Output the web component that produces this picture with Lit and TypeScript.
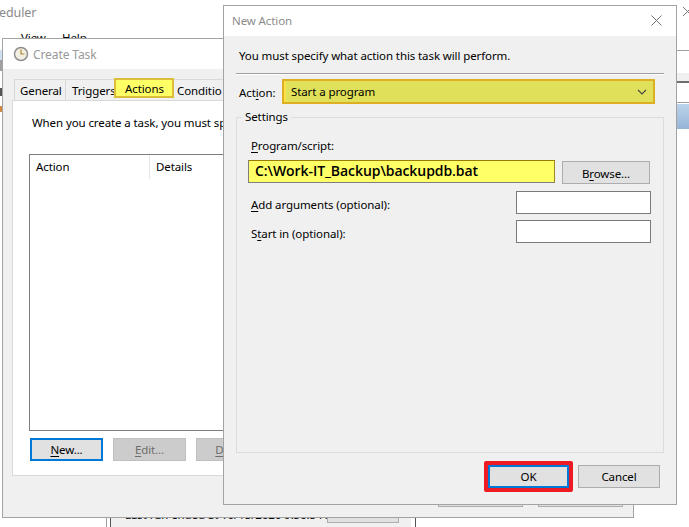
import { LitElement, html, css } from "lit";
import { customElement } from "lit/decorators.js";

@customElement("app-root")
export class AppRoot extends LitElement {
  static styles = css`
    :host { display: block; position: relative; width: 689px; height: 527px; overflow: hidden; background: #fff;
      font-family: "Noto Sans", "Open Sans", sans-serif; font-size: 11.5px; letter-spacing: -.1px; color: #000; }
    * { box-sizing: border-box; }
    u { text-decoration: underline; text-underline-offset: 2px; text-decoration-thickness: 1px; }

    /* background scheduler window */
    .back { position: absolute; left: 0; top: 0; width: 689px; height: 527px; }
    .bt { position: absolute; white-space: nowrap; line-height: 16px; }
    .sched-title { left: -1px; top: 5px; color: #8a8a8a; font-size: 12.5px; }
    .m-view { left: 21px; top: 30px; }
    .m-help { left: 62px; top: 30px; }
    .strip { position: absolute; left: 0; width: 2px; }
    .s1 { top: 50px; height: 10px; background: #cfe0f0; }
    .s2 { top: 60px; height: 11px; background: #a0a0a0; }
    .s3 { top: 88px; height: 8px; background: #555; }
    .s4 { top: 106px; height: 6px; background: #d08a40; }
    .right-x { position: absolute; left: 682px; top: 6px; }
    .r-line { position: absolute; left: 676px; width: 13px; }
    .r1 { top: 50px; height: 1px; background: #a0a0a0; }
    .r2 { top: 73px; height: 8px; background: #f0f0f0; }
    .r3 { top: 81px; height: 2px; background: #6e6e6e; }
    .r4 { top: 102px; height: 1px; background: #a0a0a0; }
    .r5 { top: 104px; height: 25px; background: linear-gradient(#bcd4ec, #96b4d6); }
    .pane { position: absolute; left: 106px; top: 500px; width: 310px; height: 27px; background: #f0f0f0;
      border-left: 1px solid #a0a0a0; border-right: 1px solid #555; box-shadow: inset 3px 0 0 #fff, inset 4px 0 0 #555, inset -4px 0 0 #fff; }
    .last-run { left: 18px; top: 7px; }
    .pane-btn { position: absolute; left: 220px; top: 0; width: 72px; height: 23px; background: #e1e1e1; border: 1px solid #adadad; }

    /* windows */
    .win { position: absolute; display: flex; flex-direction: column; background: #f0f0f0; border: 1px solid #a3a3a3; }
    .titlebar { display: flex; align-items: center; background: #fff; height: 30px; flex: none; color: #8c8c8c; }
    .create { left: 2px; top: 38px; width: 632px; height: 480px; }
    .create .titlebar { padding-left: 10px; gap: 4px; font-size: 12px; color: #999; }
    .create-body { flex: 1; padding: 10px 10px 0 9px; display: flex; flex-direction: column; }
    .tabs { display: flex; height: 21px; padding-left: 2px; flex: none; align-items: flex-start; }
    .tab { width: 51px; height: 21px; padding: 1px 0 0 6px; line-height: 20px; background: #f0f0f0; border: 1px solid #d9d9d9; border-bottom: none; border-right: none; white-space: nowrap; }
    .tab.first { padding-left: 5px; }
    .tab.hl { position: relative; z-index: 1; width: 60px; height: 20px; margin: -1px 0 0 -2px; padding: 0 0 0 9px; line-height: 17px; background: #ffff66; border: 2px solid #dcbd3a; }
    .tab.last { width: 50px; padding-left: 3px; border-left: none; }
    .panel { width: 611px; height: 376px; flex: none; background: #fff; border: 1px solid #d9d9d9; padding: 14px 16px 0; }
    .panel p { margin: 0 0 0 3px; line-height: 16px; white-space: nowrap; }
    .list { height: 277px; width: 560px; margin-top: 23px; border: 1px solid #7e7e7e; }
    .list-head { display: flex; height: 24px; line-height: 24px; }
    .list-head span { padding-left: 6px; }
    .list-head span:first-child { width: 120px; border-right: 1px solid #e5e5e5; }
    .list-btns { display: flex; gap: 10px; margin: 7px 0 0 1px; }
    .btn { display: flex; align-items: center; justify-content: center; background: #e1e1e1; border: 1px solid #adadad; height: 23px; flex: none; }
    .list-btns .btn { width: 73px; }
    .btn.focus { border: 2px solid #0078d7; }
    .btn.off { background: #ccc; border-color: #bfbfbf; color: #6d6d6d; }
    .create-foot { display: flex; gap: 15px; margin: 8px 0 0 426px; }
    .create-foot .btn { width: 85px; }

    .action { left: 223px; top: 5px; width: 454px; height: 500px; }
    .action .titlebar { padding: 0 14px 2px 8px; justify-content: space-between; color: #8c8c8c; }
    .action-body { flex: 1; padding: 0 12px; display: flex; flex-direction: column; }
    .intro { height: 38px; flex: none; padding: 12px 0 0 3px; line-height: 16px; border-bottom: 1px solid #a0a0a0; box-shadow: 0 1px 0 #fff; }
    .action-row { display: flex; align-items: center; margin-top: 5px; height: 25px; flex: none; padding-left: 3px; }
    .action-label { width: 43px; flex: none; padding-top: 2px; }
    .combo { flex: none; width: 373px; height: 25px; display: flex; align-items: center; justify-content: space-between; padding: 0 6px 0 7px;
      background: #e0e05a; border: 2px solid #dcb022; box-shadow: inset 2px 0 0 #ffe24a; }
    .group { position: relative; margin-top: 13px; width: 428px; height: 336px; flex: none; border: 1px solid #dcdcdc; padding: 20px 12px 0 11px; }
    .legend { position: absolute; left: 5px; top: -9px; padding: 0 3px; line-height: 16px; background: #f0f0f0; }
    .label { line-height: 16px; padding-left: 3px; }
    .prog-row { display: flex; align-items: flex-start; margin-top: 6px; height: 24px; }
    .prog { width: 307px; height: 23px; flex: none; padding-left: 6px; line-height: 20px; font-family: "Open Sans", sans-serif; font-weight: 600; font-size: 14px;
      background: #ffff66; border: 1px solid #7f7f7f; border-top-color: #9a7d00; border-right-color: #a08a20; white-space: nowrap; letter-spacing: -.07px; }
    .browse { width: 88px; margin: 1px 0 0 7px; padding-top: 1px; }
    .field-row { display: flex; align-items: center; justify-content: space-between; height: 23px; }
    .field-row .label { margin-top: 4px; }
    .field-row.a { margin-top: 7px; }
    .field-row.b { margin-top: 6px; }
    .input { width: 135px; height: 23px; flex: none; background: #fff; border: 1px solid #7a7a7a; }
    .action-foot { display: flex; align-items: center; gap: 5px; margin: 8px 0 0 248px; }
    .ok-mark { border: 4px solid #ed1c24; border-radius: 2px; flex: none; }
    .ok-mark .btn { width: 81px; height: 23px; }
    .cancel { width: 82px; }
    svg { display: block; flex: none; }
  `;

  render() {
    return html`
      <div class="back">
        <span class="bt sched-title">eduler</span>
        <span class="bt m-view">View</span>
        <span class="bt m-help">Help</span>
        <div class="strip s1"></div><div class="strip s2"></div><div class="strip s3"></div><div class="strip s4"></div>
        <svg class="right-x" width="11" height="11" viewBox="0 0 11 11"><path d="M1 1l9 9M10 1l-9 9" stroke="#777" fill="none"/></svg>
        <div class="r-line r1"></div><div class="r-line r2"></div><div class="r-line r3"></div><div class="r-line r4"></div><div class="r-line r5"></div>
        <div class="pane">
          <span class="bt last-run">Last run ended at 10/15/2020 9:56:54 AM</span>
          <div class="pane-btn"></div>
        </div>
      </div>

      <section class="win create">
        <div class="titlebar">
          <svg width="16" height="16" viewBox="0 0 16 16">
            <circle cx="8" cy="8" r="6.5" fill="#f2efe2" stroke="#8f8f8f" stroke-width="1.5"/>
            <path d="M8 3.5V8H11.5" stroke="#b08a30" stroke-width="1.2" fill="none"/>
          </svg>
          <span>Create Task</span>
        </div>
        <div class="create-body">
          <div class="tabs">
            <div class="tab first">General</div>
            <div class="tab">Triggers</div>
            <div class="tab hl">Actions</div>
            <div class="tab last">Conditio</div>
          </div>
          <div class="panel">
            <p>When you create a task, you must sp</p>
            <div class="list">
              <div class="list-head"><span>Action</span><span>Details</span></div>
            </div>
            <div class="list-btns">
              <div class="btn focus"><span><u>N</u>ew...</span></div>
              <div class="btn off"><span><u>E</u>dit...</span></div>
              <div class="btn off"><span><u>D</u>elete</span></div>
            </div>
          </div>
          <div class="create-foot"><div class="btn"></div><div class="btn"></div></div>
        </div>
      </section>

      <section class="win action">
        <div class="titlebar">
          <span>New Action</span>
          <svg width="11" height="11" viewBox="0 0 11 11"><path d="M.5.5l10 10M10.5.5l-10 10" stroke="#6f6f6f" fill="none"/></svg>
        </div>
        <div class="action-body">
          <div class="intro">You must specify what action this task will perform.</div>
          <div class="action-row">
            <span class="action-label">Act<u>i</u>on:</span>
            <div class="combo">
              <span>Start a program</span>
              <svg width="10" height="6" viewBox="0 0 10 6"><path d="M1 1l4 4 4-4" stroke="#444" stroke-width="1.1" fill="none"/></svg>
            </div>
          </div>
          <div class="group">
            <div class="legend">Settings</div>
            <div class="label"><u>P</u>rogram/script:</div>
            <div class="prog-row">
              <div class="prog">C:\\Work-IT_Backup\\backupdb.bat</div>
              <div class="btn browse"><span>B<u>r</u>owse...</span></div>
            </div>
            <div class="field-row a"><span class="label"><u>A</u>dd arguments (optional):</span><div class="input"></div></div>
            <div class="field-row b"><span class="label">S<u>t</u>art in (optional):</span><div class="input"></div></div>
          </div>
          <div class="action-foot">
            <div class="ok-mark"><div class="btn focus">OK</div></div>
            <div class="btn cancel">Cancel</div>
          </div>
        </div>
      </section>
    `;
  }
}
